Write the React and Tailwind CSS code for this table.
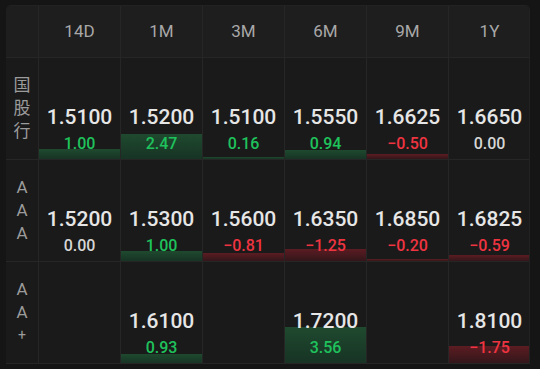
const TENORS = ["14D", "1M", "3M", "6M", "9M", "1Y"];

const ROWS = [
  {
    label: ["国", "股", "行"],
    cells: [
      ["1.5100", 1.0],
      ["1.5200", 2.47],
      ["1.5100", 0.16],
      ["1.5550", 0.94],
      ["1.6625", -0.5],
      ["1.6650", 0],
    ],
  },
  {
    label: ["A", "A", "A"],
    cells: [
      ["1.5200", 0],
      ["1.5300", 1.0],
      ["1.5600", -0.81],
      ["1.6350", -1.25],
      ["1.6850", -0.2],
      ["1.6825", -0.59],
    ],
  },
  {
    label: ["A", "A", "+"],
    cells: [null, ["1.6100", 0.93], null, ["1.7200", 3.56], null, ["1.8100", -1.75]],
  },
];

function fmt(n) {
  if (n < 0) return "\u2212" + Math.abs(n).toFixed(2);
  return n.toFixed(2);
}

function Cell({ data }) {
  if (!data) return <div className="h-[102px] border-l border-b border-[#262626]" />;
  const [value, chg] = data;
  const up = chg > 0;
  const down = chg < 0;
  return (
    <div className="relative h-[102px] border-l border-b border-[#262626] flex flex-col items-center justify-end pb-[5px]">
      {chg !== 0 && (
        <div
          className={`absolute left-0 right-0 bottom-0 bg-gradient-to-b ${
            up ? "from-[#1f4a2f] to-[#173324]" : "from-[#5c1c22] to-[#33161a]"
          }`}
          style={{ height: Math.abs(chg) * 10 }}
        />
      )}
      <div className="relative text-[21px] leading-[26px] font-medium text-[#e6e6e6]">{value}</div>
      <div
        className={`relative mt-[4px] text-[16px] leading-[20px] font-medium ${
          up ? "text-[#1fc25c]" : down ? "text-[#ef3441]" : "text-[#d6d6d6]"
        }`}
      >
        {fmt(chg)}
      </div>
    </div>
  );
}

export default function App() {
  return (
    <div
      className="w-[540px] h-[369px] bg-[#151515] pt-[5px] pl-[6px]"
      style={{ fontFamily: "Roboto, 'Noto Sans CJK SC', sans-serif" }}
    >
      <div className="w-[524px] rounded-t-[5px] overflow-hidden bg-[#1a1a1a] border-t border-r border-[#222]">
        <div className="grid grid-cols-[32px_repeat(6,82px)] bg-[#1e1e1e]">
          <div className="h-[52px] border-b border-[#262626]" />
          {TENORS.map((t) => (
            <div
              key={t}
              className="h-[52px] border-l border-b border-[#262626] flex items-center justify-center text-[17px] text-[#a8a8a8]"
            >
              {t}
            </div>
          ))}
        </div>
        {ROWS.map((row, i) => (
          <div key={i} className="grid grid-cols-[32px_repeat(6,82px)]">
            <div className="h-[102px] border-b border-[#262626] flex flex-col items-center justify-center text-[17px] leading-[23px] text-[#9c9c9c]">
              {row.label.map((c, j) => (
                <span key={j} className={c === "+" ? "text-[14px]" : ""}>
                  {c}
                </span>
              ))}
            </div>
            {row.cells.map((c, j) => (
              <Cell key={j} data={c} />
            ))}
          </div>
        ))}
      </div>
    </div>
  );
}
